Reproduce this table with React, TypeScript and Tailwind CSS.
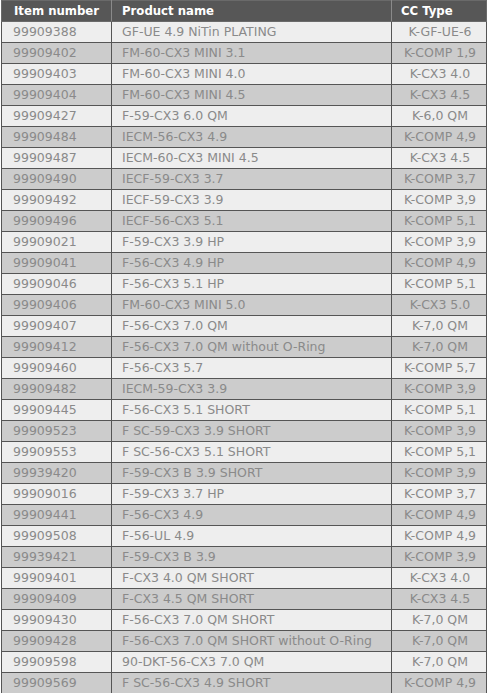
import React from "react";

const rows: [string, string, string][] = [
  ["99909388", "GF-UE 4.9 NiTin PLATING", "K-GF-UE-6"],
  ["99909402", "FM-60-CX3 MINI 3.1", "K-COMP 1,9"],
  ["99909403", "FM-60-CX3 MINI 4.0", "K-CX3 4.0"],
  ["99909404", "FM-60-CX3 MINI 4.5", "K-CX3 4.5"],
  ["99909427", "F-59-CX3 6.0 QM", "K-6,0 QM"],
  ["99909484", "IECM-56-CX3 4.9", "K-COMP 4,9"],
  ["99909487", "IECM-60-CX3 MINI 4.5", "K-CX3 4.5"],
  ["99909490", "IECF-59-CX3 3.7", "K-COMP 3,7"],
  ["99909492", "IECF-59-CX3 3.9", "K-COMP 3,9"],
  ["99909496", "IECF-56-CX3 5.1", "K-COMP 5,1"],
  ["99909021", "F-59-CX3 3.9 HP", "K-COMP 3,9"],
  ["99909041", "F-56-CX3 4.9 HP", "K-COMP 4,9"],
  ["99909046", "F-56-CX3 5.1 HP", "K-COMP 5,1"],
  ["99909406", "FM-60-CX3 MINI 5.0", "K-CX3 5.0"],
  ["99909407", "F-56-CX3 7.0 QM", "K-7,0 QM"],
  ["99909412", "F-56-CX3 7.0 QM without O-Ring", "K-7,0 QM"],
  ["99909460", "F-56-CX3 5.7", "K-COMP 5,7"],
  ["99909482", "IECM-59-CX3 3.9", "K-COMP 3,9"],
  ["99909445", "F-56-CX3 5.1 SHORT", "K-COMP 5,1"],
  ["99909523", "F SC-59-CX3 3.9 SHORT", "K-COMP 3,9"],
  ["99909553", "F SC-56-CX3 5.1 SHORT", "K-COMP 5,1"],
  ["99939420", "F-59-CX3 B 3.9 SHORT", "K-COMP 3,9"],
  ["99909016", "F-59-CX3 3.7 HP", "K-COMP 3,7"],
  ["99909441", "F-56-CX3 4.9", "K-COMP 4,9"],
  ["99909508", "F-56-UL 4.9", "K-COMP 4,9"],
  ["99939421", "F-59-CX3 B 3.9", "K-COMP 3,9"],
  ["99909401", "F-CX3 4.0 QM SHORT", "K-CX3 4.0"],
  ["99909409", "F-CX3 4.5 QM SHORT", "K-CX3 4.5"],
  ["99909430", "F-56-CX3 7.0 QM SHORT", "K-7,0 QM"],
  ["99909428", "F-56-CX3 7.0 QM SHORT without O-Ring", "K-7,0 QM"],
  ["99909598", "90-DKT-56-CX3 7.0 QM", "K-7,0 QM"],
  ["99909569", "F SC-56-CX3 4.9 SHORT", "K-COMP 4,9"],
];

export default function App() {
  return (
    <div className="bg-white w-[487px] h-[693px] overflow-hidden" style={{ fontFamily: '"DejaVu Sans", Verdana, sans-serif' }}>
      <table className="border-collapse w-[485px] ml-[1px] table-fixed text-[12.5px] leading-[20px]">
        <colgroup>
          <col className="w-[110px]" />
          <col className="w-[280px]" />
          <col className="w-[95px]" />
        </colgroup>
        <thead>
          <tr className="bg-[#575757] text-white h-[21px] font-['DejaVu_Sans_Condensed',sans-serif] text-[13px]">
            <th className="border border-[#6a6a6a] border-r-[#8a8a8a] text-left font-bold pl-[12px] py-0">Item number</th>
            <th className="border border-[#6a6a6a] border-r-[#8a8a8a] text-left font-bold pl-[10px] py-0">Product name</th>
            <th className="border border-[#6a6a6a] text-left font-bold pl-[9px] py-0">CC Type</th>
          </tr>
        </thead>
        <tbody>
          {rows.map((r, i) => (
            <tr key={r[0] + i} className={i % 2 === 0 ? "bg-[#eeeeee] h-[21px]" : "bg-[#cccccc] h-[21px]"}>
              <td className="border border-[#555555] pl-[11px] py-0 text-[#8a8a8a] whitespace-nowrap">{r[0]}</td>
              <td className="border border-[#555555] pl-[10px] py-0 text-[#8a8a8a] whitespace-nowrap">{r[1]}</td>
              <td className="border border-[#555555] text-center pl-[2px] py-0 text-[#8a8a8a] whitespace-nowrap">{r[2]}</td>
            </tr>
          ))}
        </tbody>
      </table>
    </div>
  );
}
